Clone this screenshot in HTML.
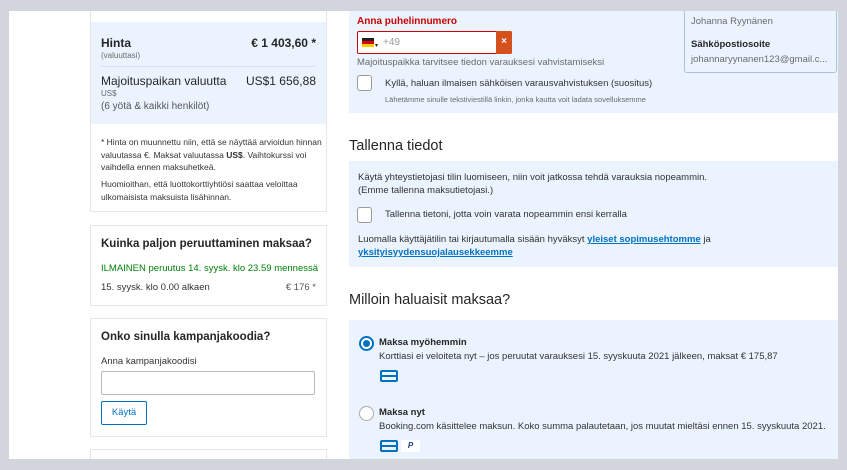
<!DOCTYPE html>
<html><head><meta charset="utf-8"><style>
*{box-sizing:border-box;margin:0;padding:0}
body{width:847px;height:470px;background:#d2d5db;font-family:"Liberation Sans",sans-serif;color:#262626;position:relative;overflow:hidden}
.page{position:absolute;left:9px;top:11px;width:829px;height:448px;background:#fff;overflow:hidden}
.a{position:absolute;white-space:nowrap}
.card{position:absolute;left:81px;width:237px;border:1px solid #e6e6e6;background:#fff}
.blue{background:#ebf3ff}
.cb{position:absolute;width:15px;height:16px;border:1px solid #9a9a9a;border-radius:3px;background:#fff}
.ccard{position:absolute;width:18px;height:12px;border:2px solid #0071c2;border-radius:2px}
.ccard:after{content:"";position:absolute;left:0;right:0;top:3px;height:2px;background:#0071c2}
</style></head><body>
<div class="page">
<!-- left column -->
<div class="card" style="top:-2px;height:203px"></div>
<div class="a blue" style="left:82px;top:11px;width:235px;height:102px"></div>
<div class="a" style="left:92px;top:25px;font-size:12px;font-weight:bold">Hinta</div>
<div class="a" style="left:92px;top:40px;font-size:8px;color:#6b6b6b">(valuuttasi)</div>
<div class="a" style="right:522px;top:25px;font-size:12px;font-weight:bold">€ 1 403,60 *</div>
<div class="a" style="left:92px;top:55px;width:214px;border-top:1px solid #d8e2ee"></div>
<div class="a" style="left:92px;top:63px;font-size:12px">Majoituspaikan valuutta</div>
<div class="a" style="right:522px;top:63px;font-size:12px">US$1 656,88</div>
<div class="a" style="left:92px;top:78px;font-size:8px;color:#6b6b6b">US$</div>
<div class="a" style="left:92px;top:90px;font-size:10px;color:#555">(6 yötä &amp; kaikki henkilöt)</div>
<div class="a" style="left:92px;top:125px;font-size:8.5px;line-height:12.5px;color:#333">* Hinta on muunnettu niin, että se näyttää arvioidun hinnan<br>valuutassa €. Maksat valuutassa <b>US$</b>. Vaihtokurssi voi<br>vaihdella ennen maksuhetkeä.</div>
<div class="a" style="left:92px;top:167px;font-size:8.5px;line-height:12.5px;color:#333">Huomioithan, että luottokorttiyhtiösi saattaa veloittaa<br>ulkomaisista maksuista lisähinnan.</div>

<div class="card" style="top:214px;height:81px"></div>
<div class="a" style="left:92px;top:227px;font-size:11.5px;font-weight:bold">Kuinka paljon peruuttaminen maksaa?</div>
<div class="a" style="left:92px;top:252px;font-size:9.5px;color:#008009">ILMAINEN peruutus 14. syysk. klo 23.59 mennessä</div>
<div class="a" style="left:92px;top:271px;font-size:9.5px;color:#333">15. syysk. klo 0.00 alkaen</div>
<div class="a" style="right:522px;top:271px;font-size:9.5px;color:#555">€ 176 *</div>

<div class="card" style="top:307px;height:119px"></div>
<div class="a" style="left:92px;top:320px;font-size:11.5px;font-weight:bold">Onko sinulla kampanjakoodia?</div>
<div class="a" style="left:92px;top:345px;font-size:9.5px;color:#333">Anna kampanjakoodisi</div>
<div class="a" style="left:92px;top:360px;width:214px;height:24px;border:1px solid #bbb;border-radius:2px"></div>
<div class="a" style="left:92px;top:390px;width:46px;height:24px;border:1px solid #0071c2;border-radius:2px;color:#0071c2;font-size:9.5px;text-align:center;line-height:22px">Käytä</div>
<div class="card" style="top:438px;height:30px"></div>

<!-- right column -->
<div class="a blue" style="left:340px;top:0;width:489px;height:102px"></div>
<div class="a" style="left:348px;top:5px;font-size:10px;font-weight:bold;color:#c00">Anna puhelinnumero</div>
<div class="a" style="left:348px;top:20px;width:155px;height:23px;border:1px solid #c00;border-radius:2px;background:#fff"></div>
<div class="a" style="left:353px;top:27px;width:12px;height:9px;background:linear-gradient(#222 33%,#d00 33% 66%,#fc0 66%)"></div>
<div class="a" style="left:366px;top:31px;font-size:6px">▾</div>
<div class="a" style="left:374px;top:26px;font-size:10px;color:#999">+49</div>
<div class="a" style="left:487px;top:20px;width:16px;height:23px;background:#d4501c;border-radius:0 2px 2px 0;color:#fff;font-size:10px;font-weight:bold;text-align:center;line-height:22px">×</div>
<div class="a" style="left:348px;top:46px;font-size:9.5px;color:#6b6b6b">Majoituspaikka tarvitsee tiedon varauksesi vahvistamiseksi</div>
<div class="cb" style="left:348px;top:64px"></div>
<div class="a" style="left:376px;top:67px;font-size:9.5px;color:#333">Kyllä, haluan ilmaisen sähköisen varausvahvistuksen (suositus)</div>
<div class="a" style="left:376px;top:84px;font-size:7.5px;color:#6b6b6b">Lähetämme sinulle tekstiviestillä linkin, jonka kautta voit ladata sovelluksemme</div>
<div class="a" style="left:675px;top:-5px;width:153px;height:67px;border:1px solid #a9c3dd;border-radius:3px;background:#ebf3ff"></div>
<div class="a" style="left:682px;top:5px;font-size:9.5px;color:#6b6b6b">Johanna Ryynänen</div>
<div class="a" style="left:682px;top:28px;font-size:9.5px;font-weight:bold">Sähköpostiosoite</div>
<div class="a" style="left:682px;top:43px;font-size:9.5px;color:#6b6b6b">johannaryynanen123@gmail.c...</div>

<div class="a" style="left:340px;top:127px;font-size:14.5px">Tallenna tiedot</div>
<div class="a blue" style="left:340px;top:150px;width:489px;height:106px"></div>
<div class="a" style="left:349px;top:160px;font-size:9.5px;line-height:13px;color:#333">Käytä yhteystietojasi tilin luomiseen, niin voit jatkossa tehdä varauksia nopeammin.<br>(Emme tallenna maksutietojasi.)</div>
<div class="cb" style="left:348px;top:196px"></div>
<div class="a" style="left:376px;top:198px;font-size:9.5px;color:#333">Tallenna tietoni, jotta voin varata nopeammin ensi kerralla</div>
<div class="a" style="left:349px;top:222px;font-size:9.5px;line-height:13px;color:#333">Luomalla käyttäjätilin tai kirjautumalla sisään hyväksyt <b style="color:#0071c2;text-decoration:underline">yleiset sopimusehtomme</b> ja<br><b style="color:#0071c2;text-decoration:underline">yksityisyydensuojalausekkeemme</b></div>

<div class="a" style="left:340px;top:281px;font-size:14.5px">Milloin haluaisit maksaa?</div>
<div class="a blue" style="left:340px;top:309px;width:489px;height:140px"></div>
<div class="a" style="left:350px;top:325px;width:15px;height:15px;border-radius:50%;border:2px solid #0071c2;background:#fff"></div>
<div class="a" style="left:354px;top:329px;width:7px;height:7px;border-radius:50%;background:#0071c2"></div>
<div class="a" style="left:370px;top:326px;font-size:9.5px;font-weight:bold">Maksa myöhemmin</div>
<div class="a" style="left:370px;top:340px;font-size:9.5px;color:#333">Korttiasi ei veloiteta nyt – jos peruutat varauksesi 15. syyskuuta 2021 jälkeen, maksat € 175,87</div>
<div class="ccard" style="left:371px;top:359px"></div>
<div class="a" style="left:350px;top:395px;width:15px;height:15px;border-radius:50%;border:1px solid #aaa;background:#fff"></div>
<div class="a" style="left:370px;top:396px;font-size:9.5px;font-weight:bold">Maksa nyt</div>
<div class="a" style="left:370px;top:410px;font-size:9.5px;color:#333">Booking.com käsittelee maksun. Koko summa palautetaan, jos muutat mieltäsi ennen 15. syyskuuta 2021.</div>
<div class="ccard" style="left:371px;top:429px"></div>
<div class="a" style="left:392px;top:429px;width:19px;height:12px;background:#fff;font-size:8px;font-weight:bold;font-style:italic;color:#1a3a8a;text-align:center;line-height:12px">P</div>
</div>
</body></html>
